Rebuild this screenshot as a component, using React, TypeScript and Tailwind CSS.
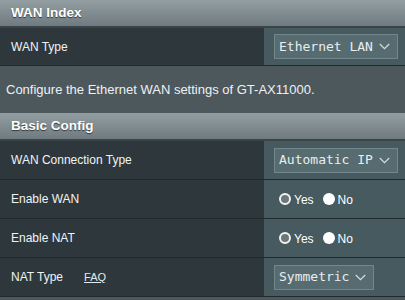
import React from "react";

function Chevron() {
  return (
    <svg width="11" height="7" viewBox="0 0 11 7" className="ml-[6px]" fill="none">
      <path d="M0.8 1 L5.5 5.6 L10.2 1" stroke="#d5dde0" strokeWidth="1.2" />
    </svg>
  );
}

function Select({ value }: { value: string }) {
  return (
    <div className="inline-flex h-[25px] items-center border border-[#71878c] bg-[#566c71] pl-[4px] pr-[7px] font-['DejaVu_Sans_Mono',monospace] text-[13px] text-[#e9eef0]">
      <span>{value}</span>
      <Chevron />
    </div>
  );
}

function Radio({ label, checked }: { label: string; checked?: boolean }) {
  return (
    <span className="inline-flex items-center">
      {checked ? (
        <span className="h-[12px] w-[12px] rounded-full bg-white" />
      ) : (
        <span className="h-[12px] w-[12px] rounded-full border-2 border-[#f2f2f2] bg-[#6e787b]" />
      )}
      <span className="ml-[3px] mt-[2px] text-[12px] text-white">{label}</span>
    </span>
  );
}

function Header({ title }: { title: string }) {
  return (
    <div className="flex h-[28px] items-center border-b-2 border-[#3a4448] bg-gradient-to-b from-[#939ea2] to-[#6f7b80] pl-[11px]">
      <span className="text-[13.5px] font-bold text-white [text-shadow:0_1px_1px_rgba(0,0,0,0.6)]">
        {title}
      </span>
    </div>
  );
}

function Row({
  label,
  children,
  extra,
  short,
}: {
  label: string;
  children: React.ReactNode;
  extra?: React.ReactNode;
  short?: boolean;
}) {
  return (
    <div className={short ? "flex h-[38px] border-b border-[#222a2d]" : "flex h-[39px] border-b border-[#222a2d]"}>
      <div className="flex w-[264px] items-center bg-[#2e383c] pl-[11px] text-[12px] text-[#f0f3f4]">
        {label}
        {extra}
      </div>
      <div className="flex flex-1 items-center bg-[#475a5f] pl-[10px]">{children}</div>
    </div>
  );
}

export default function App() {
  return (
    <div className="h-[300px] w-[405px] overflow-hidden bg-[#4d585d] font-['Liberation_Sans',Arial,sans-serif]">
      <Header title="WAN Index" />
      <Row label="WAN Type" short>
        <Select value="Ethernet LAN" />
      </Row>
      <div className="flex h-[47px] items-center pl-[6px] text-[13px] text-[#eef1f2]">
        Configure the Ethernet WAN settings of GT-AX11000.
      </div>
      <Header title="Basic Config" />
      <Row label="WAN Connection Type">
        <Select value="Automatic IP" />
      </Row>
      <Row label="Enable WAN">
        <div className="flex items-center gap-[9px] pl-[5px]">
          <Radio label="Yes" />
          <Radio label="No" checked />
        </div>
      </Row>
      <Row label="Enable NAT">
        <div className="flex items-center gap-[9px] pl-[5px]">
          <Radio label="Yes" />
          <Radio label="No" checked />
        </div>
      </Row>
      <Row
        label="NAT Type"
        extra={
          <a className="ml-[21px] text-[11px] text-[#e4eaec] underline">FAQ</a>
        }
      >
        <Select value="Symmetric" />
      </Row>
    </div>
  );
}
